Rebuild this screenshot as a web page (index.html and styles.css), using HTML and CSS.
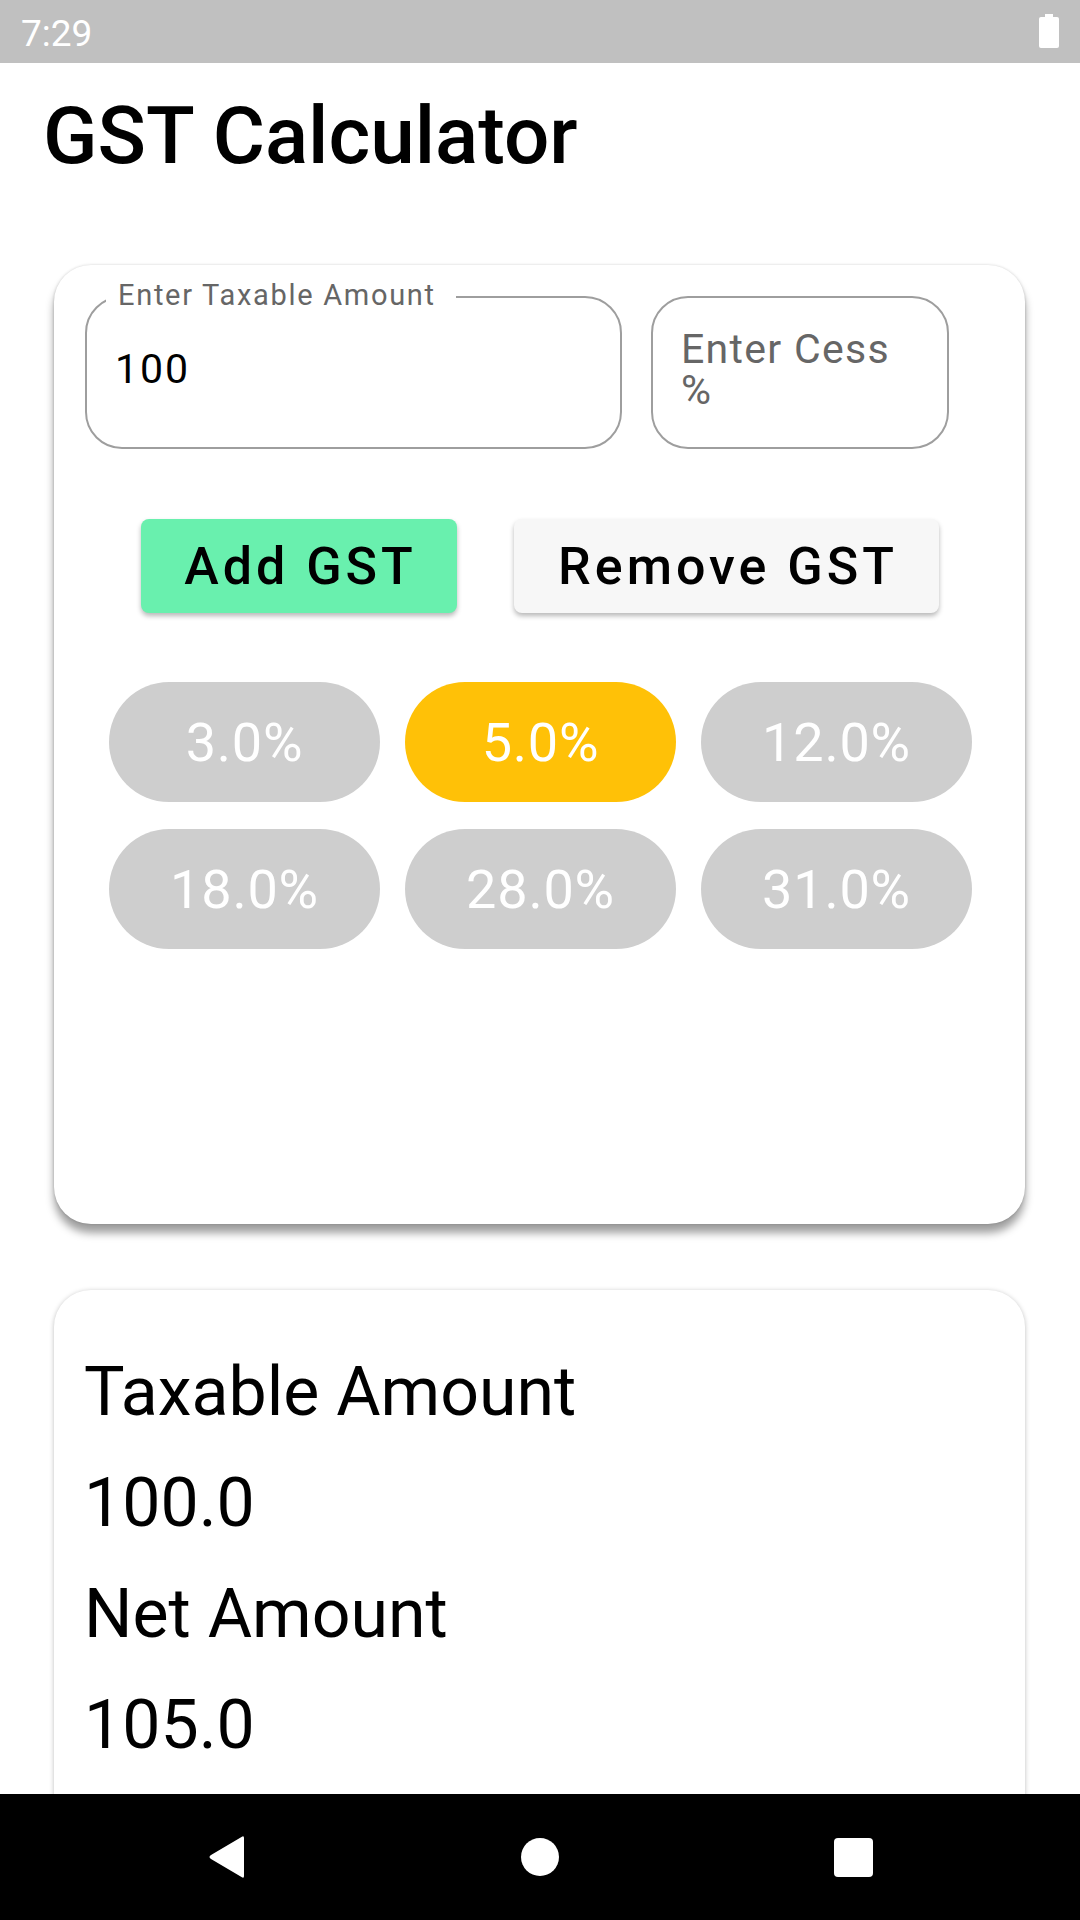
FILE: index.html
```html
<!DOCTYPE html>
<html lang="en">
<head>
<meta charset="utf-8">
<title>GST Calculator</title>
<link rel="stylesheet" href="styles.css">
</head>
<body>
<header class="status-bar">
  <span class="status-time">7:29</span>
  <svg class="battery" width="20" height="34" viewBox="0 0 20 34" aria-hidden="true">
    <rect x="6" y="0" width="8" height="4" fill="#fff"/>
    <rect x="0" y="3" width="20" height="31" rx="2" fill="#fff"/>
  </svg>
</header>

<main class="content">
  <h1 class="app-title">GST Calculator</h1>

  <section class="card card-input">
    <div class="fields">
      <div class="field field-amount">
        <span class="field-label">Enter Taxable Amount</span>
        <span class="field-value">100</span>
      </div>
      <div class="field field-cess">
        <span class="field-placeholder">Enter Cess %</span>
      </div>
    </div>

    <div class="actions">
      <button class="btn btn-add">Add GST</button>
      <button class="btn btn-remove">Remove GST</button>
    </div>

    <div class="rates">
      <span class="chip">3.0%</span>
      <span class="chip chip-selected">5.0%</span>
      <span class="chip">12.0%</span>
      <span class="chip">18.0%</span>
      <span class="chip">28.0%</span>
      <span class="chip">31.0%</span>
    </div>
  </section>

  <section class="card card-result">
    <p class="result-line">Taxable Amount</p>
    <p class="result-line">100.0</p>
    <p class="result-line">Net Amount</p>
    <p class="result-line">105.0</p>
  </section>
</main>

<nav class="nav-bar">
  <span class="nav-slot">
    <svg width="38" height="44" viewBox="0 0 38 44" aria-hidden="true">
      <path d="M36 3 L36 41 Q36 44 33.5 42 L3 24 Q0 22 3 20 L33.5 2 Q36 0 36 3 Z" fill="#fff"/>
    </svg>
  </span>
  <span class="nav-slot">
    <span class="nav-home"></span>
  </span>
  <span class="nav-slot">
    <span class="nav-recent"></span>
  </span>
</nav>
</body>
</html>
```

FILE: styles.css
```css
* {
  box-sizing: border-box;
}

html, body {
  margin: 0;
  padding: 0;
}

body {
  width: 1080px;
  height: 1920px;
  overflow: hidden;
  background: #ffffff;
  font-family: Roboto, "Noto Sans", "Liberation Sans", sans-serif;
  color: #000;
  position: relative;
}

/* Status bar */
.status-bar {
  height: 63px;
  background: #c0c0c0;
  display: flex;
  align-items: center;
  justify-content: space-between;
  padding: 0 21px 0 21px;
}

.status-time {
  color: #ffffff;
  font-size: 37px;
  line-height: 63px;
  padding-top: 3px;
}

.battery {
  display: block;
  margin-top: -2px;
}

/* Content */
.content {
  padding: 26px 0 0 0;
}

.app-title {
  margin: 0 0 0 43px;
  font-size: 80px;
  font-weight: 500;
  line-height: normal;
}

.card {
  margin: 82px 55px 0 54px;
  background: #ffffff;
  border-radius: 37px;
}

.card-input {
  height: 959px;
  padding: 31px 31px;
  box-shadow: 0 9px 9px rgba(0, 0, 0, 0.38), 0 0 3px rgba(0, 0, 0, 0.18);
}

.fields {
  display: flex;
  gap: 29px;
}

.field {
  position: relative;
  height: 153px;
  border: 2px solid #9e9e9e;
  border-radius: 37px;
}

.field-amount {
  width: 537px;
  padding: 48px 27px 0 28px;
}

.field-cess {
  width: 298px;
  padding: 31px 50px 0 28px;
}

.field-label {
  position: absolute;
  top: -19px;
  left: 19px;
  padding: 0 20px 0 12px;
  background: #ffffff;
  color: #666666;
  font-size: 29px;
  letter-spacing: 1.7px;
  line-height: 33px;
}

.field-value {
  display: block;
  font-size: 41px;
  letter-spacing: 2px;
  line-height: 47px;
  color: #000;
}

.field-placeholder {
  display: block;
  font-size: 41px;
  letter-spacing: 1.3px;
  line-height: 41px;
  color: #666666;
}

/* Buttons */
.actions {
  display: flex;
  justify-content: center;
  gap: 57px;
  margin-top: 70px;
}

.btn {
  height: 94px;
  border: none;
  border-radius: 8px;
  font-family: Roboto, "Noto Sans", "Liberation Sans", sans-serif;
  font-size: 52px;
  font-weight: 500;
  letter-spacing: 4px;
  text-indent: 4px;
  color: #000;
  padding: 0;
  box-shadow: 0 3px 5px rgba(0, 0, 0, 0.28);
}

.btn-add {
  width: 316px;
  background: #69f0ae;
}

.btn-remove {
  width: 425px;
  background: #f7f7f7;
}

/* Rate chips */
.rates {
  display: grid;
  grid-template-columns: repeat(3, 271px);
  column-gap: 25px;
  row-gap: 27px;
  margin: 69px 0 0 24px;
}

.chip {
  height: 120px;
  border-radius: 60px;
  background: #cecece;
  color: #ffffff;
  font-size: 54px;
  letter-spacing: 0.8px;
  display: flex;
  align-items: center;
  justify-content: center;
}

.chip-selected {
  background: #ffc107;
}

/* Result card */
.card-result {
  margin-top: 66px;
  height: 620px;
  padding: 47px 30px 0 30px;
  box-shadow: 0 1px 5px rgba(0, 0, 0, 0.26);
}

.result-line {
  margin: 0;
  font-size: 68px;
  line-height: 111px;
}

/* Navigation bar */
.nav-bar {
  position: absolute;
  left: 0;
  right: 0;
  bottom: 0;
  height: 126px;
  background: #000;
  display: flex;
  justify-content: center;
  align-items: center;
}

.nav-slot {
  width: 313px;
  display: flex;
  justify-content: center;
  align-items: center;
}

.nav-home {
  width: 38px;
  height: 38px;
  border-radius: 50%;
  background: #fff;
}

.nav-recent {
  width: 39px;
  height: 39px;
  border-radius: 4px;
  background: #fff;
}
```
